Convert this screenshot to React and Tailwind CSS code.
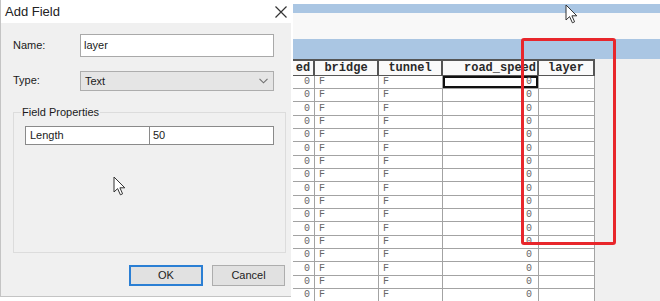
import React from 'react';

const rows = Array.from({ length: 17 }, (_, i) => i);

function Pointer({ className }) {
  return (
    <svg className={className} width="14" height="20" viewBox="0 0 14 20">
      <path
        d="M1 1 L1 16 L4.6 12.6 L7.4 18.8 L9.6 17.8 L6.9 11.8 L11.8 11.8 Z"
        fill="#fff"
        stroke="#333"
        strokeWidth="1"
        strokeLinejoin="round"
      />
    </svg>
  );
}

function AddFieldDialog() {
  return (
    <div className="relative w-[291px] h-[297px] flex flex-col bg-[#f0f0f0] border-l border-b border-[#c4c4c4] font-['Liberation_Sans',sans-serif] text-[11px] text-[#1a1a1a]">
      {/* Title bar */}
      <div className="h-[23px] bg-white flex items-center justify-between pl-[4px] pr-[3px] shrink-0">
        <span className="text-[13px] text-[#222] leading-none">Add Field</span>
        <svg width="12" height="12" viewBox="0 0 12 12" className="mr-[1px]">
          <path d="M0.5 0.5 L11.5 11.5 M11.5 0.5 L0.5 11.5" stroke="#333" strokeWidth="1.2" />
        </svg>
      </div>

      {/* Name */}
      <div className="flex items-start mt-[11px] pl-[12px]">
        <span className="w-[67px] pt-[3px]">Name:</span>
        <div className="w-[194px] h-[23px] bg-white border border-[#a9a9a9] flex items-center pl-[3px]">
          layer
        </div>
      </div>

      {/* Type */}
      <div className="flex items-start mt-[14px] pl-[12px]">
        <span className="w-[67px] pt-[1px]">Type:</span>
        <div className="w-[194px] h-[20px] bg-[#e5e5e5] border border-[#adadad] flex items-center justify-between pl-[4px] pr-[5px]">
          <span>Text</span>
          <svg width="9" height="6" viewBox="0 0 9 6">
            <path d="M0.5 0.8 L4.5 4.8 L8.5 0.8" fill="none" stroke="#6f6f6f" strokeWidth="1.1" />
          </svg>
        </div>
      </div>

      {/* Field Properties */}
      <fieldset className="ml-[12px] mt-[13px] w-[273px] h-[149px] border border-[#dcdcdc]">
        <legend className="ml-[7px] px-[1px] text-[11px] leading-[16px]">Field Properties</legend>
        <div className="mt-[6px] ml-[11px] w-[249px] h-[19px] flex bg-white border border-[#8a8a8a]">
          <div className="w-[124px] border-r border-[#8a8a8a] flex items-center pl-[4px]">Length</div>
          <div className="flex-1 flex items-center pl-[3px]">50</div>
        </div>
      </fieldset>

      {/* Buttons */}
      <div className="flex gap-[9px] mt-[12px] pl-[128px]">
        <button className="w-[74px] h-[21px] bg-[#e1e1e1] border-2 border-[#2b7fd4] text-[11px] text-[#222]">
          OK
        </button>
        <button className="w-[73px] h-[21px] bg-[#e1e1e1] border border-[#adadad] text-[11px] text-[#222]">
          Cancel
        </button>
      </div>

      <Pointer className="absolute left-[112px] top-[176px]" />
    </div>
  );
}

function AttributeTable() {
  return (
    <div className="flex-1 flex flex-col bg-white ml-[2px] font-['Liberation_Mono',monospace]">
      <div className="h-[4px] shrink-0" />
      <div className="h-[9px] bg-[#aac6e3] shrink-0" />
      <div className="h-[26px] bg-[#f8f8f8] shrink-0" />
      <div className="h-[20px] bg-[#aac6e3] shrink-0" />

      <div className="flex-1 bg-[#f0f0f0] overflow-hidden">
        {/* Header */}
        <div className="flex w-[302px] h-[17px] bg-[#fafafa] border-t-2 border-b border-[#555] text-[12px] font-bold text-[#2a2a2a] leading-[14px]">
          <div className="w-[22px] border-r-2 border-[#555] text-center overflow-hidden">ed</div>
          <div className="w-[64px] border-r-2 border-[#555] text-center">bridge</div>
          <div className="w-[64px] border-r-2 border-[#555] text-center">tunnel</div>
          <div className="w-[96px] border-r-2 border-[#555] pl-[21px] overflow-hidden whitespace-nowrap">road_speed</div>
          <div className="w-[56px] border-r-2 border-[#555] text-center">layer</div>
        </div>

        {/* Rows */}
        {rows.map(i => (
          <div
            key={i}
            className={`flex w-[302px] bg-white text-[10px] text-[#666] leading-none ${i % 3 === 2 ? 'h-[14px]' : 'h-[13px]'}`}
          >
            <div className="w-[22px] border-r border-b border-[#a3a3a3] flex items-center justify-end pr-[4px]">0</div>
            <div className="w-[64px] border-r border-b border-[#a3a3a3] flex items-center pl-[4px]">F</div>
            <div className="w-[64px] border-r border-b border-[#a3a3a3] flex items-center pl-[4px]">F</div>
            <div
              className={`w-[96px] border-r border-b border-[#a3a3a3] flex items-center justify-end pr-[6px] ${i === 0 ? 'shadow-[inset_0_0_0_2px_#111]' : ''}`}
            >
              0
            </div>
            <div className="w-[56px] border-r border-b border-[#a3a3a3]" />
          </div>
        ))}
      </div>
    </div>
  );
}

export default function App() {
  return (
    <div className="relative w-[660px] h-[301px] overflow-hidden bg-white flex">
      <AddFieldDialog />
      <AttributeTable />

      {/* Red highlight annotation */}
      <div className="absolute left-[521px] top-[38px] w-[95px] h-[207px] border-[3px] border-[#e8262b] rounded-[3px]" />
      <Pointer className="absolute left-[565px] top-[4px]" />
    </div>
  );
}
